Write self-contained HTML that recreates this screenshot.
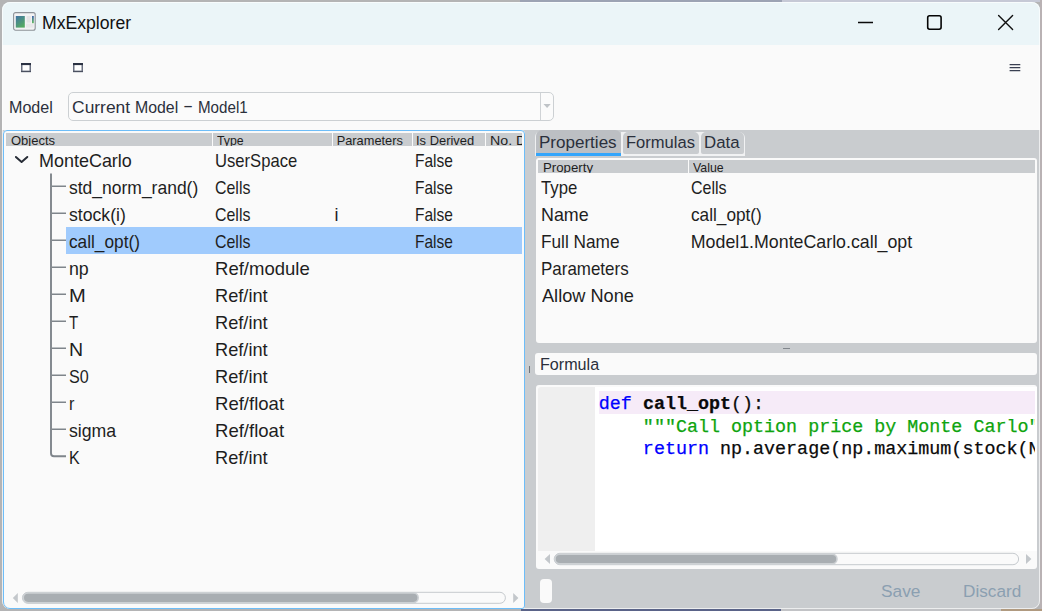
<!DOCTYPE html>
<html>
<head>
<meta charset="utf-8">
<title>MxExplorer</title>
<style>
html,body{margin:0;padding:0;}
body{width:1042px;height:611px;overflow:hidden;background:#b4b4b5;position:relative;
  font-family:"Liberation Sans","DejaVu Sans",sans-serif;color:#1b1b1b;}
*{box-sizing:border-box;}
.a{position:absolute;}
#win{position:absolute;left:2px;top:2px;width:1038px;height:607px;border-radius:8px;background:#c9cccf;overflow:hidden;}
#o{position:absolute;left:-2px;top:-2px;width:1042px;height:611px;}
#edge{position:absolute;left:2px;top:2px;width:1038px;height:607px;border-radius:8px;border:1px solid rgba(255,255,255,.65);pointer-events:none;}
.t{position:absolute;white-space:nowrap;transform-origin:0 0;}
.sep{position:absolute;top:0;width:1px;height:13px;background:#fafafa;}
.mono{font-family:"Liberation Mono","DejaVu Sans Mono",monospace;font-size:18.36px;white-space:pre;-webkit-text-stroke:0.25px;position:absolute;line-height:23px;color:#0a0a0a;}
.kw{color:#0000ff;}
.st{color:#0ea40e;}
</style>
</head>
<body>
<!-- desktop fragments visible outside the window -->
<div class="a" style="left:520px;top:0;width:262px;height:2px;background:#9ca3b4;"></div>
<div class="a" style="left:782px;top:0;width:260px;height:2px;background:#c6c9d6;"></div>
<div class="a" style="left:1040px;top:0;width:2px;height:611px;background:#b9b2b4;"></div>
<div class="a" style="left:521px;top:609px;width:260px;height:2px;background:#5a6388;"></div>
<div class="a" style="left:781px;top:609px;width:220px;height:2px;background:#c2c3c6;"></div>
<div class="a" style="left:1001px;top:609px;width:41px;height:2px;background:#b09a80;"></div>

<div id="win"><div id="o">
  <!-- title bar -->
  <div class="a" id="title" style="left:2px;top:2px;width:1038px;height:43px;background:#ebf5f8;"></div>
  <svg class="a" style="left:12px;top:11px" width="25" height="22" viewBox="0 0 25 22">
    <defs><linearGradient id="g1" x1="0" y1="0" x2="0.6" y2="1"><stop offset="0" stop-color="#4173a6"/><stop offset="1" stop-color="#55aa62"/></linearGradient>
    <linearGradient id="g2" x1="0" y1="0" x2="0" y2="1"><stop offset="0" stop-color="#3f64ad"/><stop offset="1" stop-color="#62bb5e"/></linearGradient></defs>
    <rect x="1.6" y="1.6" width="21.6" height="17.6" rx="2" fill="#f3f3f4" stroke="#8d9298" stroke-width="1.1"/>
    <rect x="3.8" y="5" width="9" height="11.6" fill="url(#g1)"/>
    <rect x="14.6" y="5" width="4.2" height="6.6" fill="#e4e4e5"/>
    <rect x="14" y="12.6" width="7.6" height="4" fill="#e8e8e9"/>
    <rect x="20" y="5" width="1.8" height="7.2" fill="url(#g2)"/>
  </svg>
  <svg class="a" style="left:850px;top:8px" width="180" height="30" viewBox="0 0 180 30">
    <path d="M8 14.5H23" stroke="#0a0a0a" stroke-width="1.3" fill="none"/>
    <rect x="77.7" y="7.8" width="13.4" height="13.4" rx="1.9" stroke="#050505" stroke-width="1.6" fill="none"/>
    <path d="M148.6 7.5L162.6 21.5M162.6 7.5L148.6 21.5" stroke="#111" stroke-width="1.4" fill="none" stroke-linecap="round"/>
  </svg>
  <!-- toolbar -->
  <div class="a" style="left:2px;top:45px;width:1038px;height:85px;background:#fafafa;"></div>
  <svg class="a" style="left:20px;top:62px" width="12" height="12" viewBox="0 0 12 12"><rect x="1.75" y="1.75" width="8.5" height="7.6" fill="#fff" stroke="#6a7080" stroke-width="1.5"/><rect x="1" y="1" width="10" height="2.1" fill="#2b3243"/><rect x="1" y="9.2" width="10" height="0.9" fill="#424959"/></svg>
  <svg class="a" style="left:72px;top:62px" width="12" height="12" viewBox="0 0 12 12"><rect x="1.75" y="1.75" width="8.5" height="7.6" fill="#fff" stroke="#6a7080" stroke-width="1.5"/><rect x="1" y="1" width="10" height="2.1" fill="#2b3243"/><rect x="1" y="9.2" width="10" height="0.9" fill="#424959"/></svg>
  <svg class="a" style="left:1008px;top:63px" width="14" height="10" viewBox="0 0 14 10"><path d="M1.6 1.55H12.3M1.6 4.55H12.3M1.6 7.55H12.3" stroke="#3a4052" stroke-width="1.2"/></svg>
  <div class="a" style="left:68px;top:92px;width:486px;height:29px;border:1px solid #ccd0d3;border-radius:5px;background:#fbfbfb;"></div>
  <div class="a" style="left:540px;top:93px;width:1px;height:27px;background:#d0d3d6;"></div>
  <svg class="a" style="left:543px;top:103px" width="9" height="6" viewBox="0 0 9 6"><path d="M0.5 1H7.7L4.1 5Z" fill="#bfc3c7"/></svg>

  <!-- tree panel -->
  <div class="a" style="left:3px;top:130px;width:522px;height:479px;background:#fafafa;border-radius:4px 4px 3px 7px;"></div>
  <div class="a" style="left:6px;top:133px;width:516px;height:13px;background:#c9cccf;overflow:hidden;">
    <div class="sep" style="left:206px"></div><div class="sep" style="left:326px"></div><div class="sep" style="left:406px"></div><div class="sep" style="left:479px"></div>
<div class="t" style="left:4.69px;top:-1.04px;font-size:12.8px;line-height:17px;color:#1e1e1e;transform:scaleX(1.0167);">Objects</div>
<div class="t" style="left:211.21px;top:-1.04px;font-size:12.8px;line-height:17px;color:#1e1e1e;transform:scaleX(0.9618);">Type</div>
<div class="t" style="left:330.70px;top:-1.04px;font-size:12.8px;line-height:17px;color:#1e1e1e;">Parameters</div>
<div class="t" style="left:410.39px;top:-1.04px;font-size:12.8px;line-height:17px;color:#1e1e1e;transform:scaleX(1.0108);">Is Derived</div>
<div class="t" style="left:483.59px;top:-1.04px;font-size:12.8px;line-height:17px;color:#1e1e1e;transform:scaleX(1.1100);">No. D</div>
  </div>
  <div class="a" style="left:66px;top:227px;width:456px;height:27px;background:#a0cbfd;"></div>
  <svg class="a" style="left:0;top:130px" width="100" height="350" viewBox="0 130 100 350">
    <g stroke="#7f858b" fill="none">
      <path d="M51 173.4V453.3Q51 456.3 54 456.3H66" stroke-width="1.9"/>
      <path d="M52 186.3H66M52 213.3H66M52 240.3H66M52 267.3H66M52 294.3H66M52 321.3H66M52 348.3H66M52 375.3H66M52 402.3H66M52 429.3H66" stroke-width="1.6"/>
    </g>
    <path d="M15.9 157L21.6 162L27.3 157" stroke="#272c36" stroke-width="2" fill="none" stroke-linecap="round" stroke-linejoin="round"/>
  </svg>
  <svg class="a" style="left:8px;top:590px" width="514" height="16" viewBox="8 590 514 16">
    <path d="M17.8 593V603L12.8 598Z" fill="#c3c7cb"/>
    <rect x="22.4" y="592.3" width="483" height="11" rx="5.5" fill="#fafafa" stroke="#c6cace" stroke-width="1"/>
    <rect x="23.2" y="592.9" width="395" height="9.8" rx="4.9" fill="#a9aeb2" stroke="#cdd1d4" stroke-width="1.6"/>
    <path d="M513.2 593V603L518.4 598Z" fill="#c3c7cb"/>
  </svg>

  <!-- tabs -->
  <div class="a" style="left:535px;top:131px;width:6px;height:25px;background:#eff0f1;border-radius:6px 0 0 0;"></div>
  <div class="a" style="left:621px;top:132px;width:124px;height:24px;background:#f1f2f3;border-radius:0 6px 0 0;"></div>
  <div class="a" style="left:536px;top:130px;width:85px;height:26px;background:#bcbfc3;border-radius:6px 6px 0 0;"></div>
  <div class="a" style="left:536px;top:153px;width:85px;height:3px;background:#33a5fb;"></div>
  <div class="a" style="left:623px;top:132px;width:75.5px;height:22px;background:#c9cccf;border-radius:5px 5px 2px 2px;"></div>
  <div class="a" style="left:701px;top:132px;width:43px;height:22px;background:#c9cccf;border-radius:5px 5px 2px 2px;"></div>

  <!-- properties panel -->
  <div class="a" style="left:536px;top:158px;width:501px;height:185px;background:#fafafa;border-radius:3px;"></div>
  <div class="a" style="left:538px;top:160px;width:497px;height:13px;background:#c9cccf;overflow:hidden;">
    <div class="sep" style="left:150px"></div>
<div class="t" style="left:4.67px;top:-1.04px;font-size:12.8px;line-height:17px;color:#1e1e1e;transform:scaleX(1.0343);">Property</div>
<div class="t" style="left:155.10px;top:-1.04px;font-size:12.8px;line-height:17px;color:#1e1e1e;transform:scaleX(0.9626);">Value</div>
  </div>
  <div class="a" style="left:783px;top:348px;width:7px;height:1px;background:#81868c;"></div>
  <div class="a" style="left:529px;top:366px;width:1px;height:7px;background:#6f747a;"></div>

  <!-- formula label -->
  <div class="a" style="left:535px;top:353px;width:502px;height:22px;background:#fafafa;border-radius:3px;"></div>

  <!-- code editor -->
  <div class="a" style="left:536px;top:385px;width:501px;height:184px;background:#fafafa;border-radius:3px;"></div>
  <div class="a" style="left:595px;top:387px;width:442px;height:164px;background:#fff;"></div>
  <div class="a" style="left:595px;top:387px;width:440px;height:164px;overflow:hidden;">
    <div class="a" style="left:4px;top:4px;width:437px;height:23px;background:#f6ebf8;"></div>
    <div class="mono" style="left:3.8px;top:6px;"><span class="kw">def</span> <b>call_opt</b>():</div>
    <div class="mono" style="left:3.8px;top:28.7px;"><span class="st">    """Call option price by Monte Carlo"</span></div>
    <div class="mono" style="left:3.8px;top:51.4px;"><span class="kw">    return</span> np.average(np.maximum(stock(N</div>
  </div>
  <div class="a" style="left:538px;top:387px;width:57px;height:164px;background:#efefef;border-radius:3px 0 0 0;"></div>
  <svg class="a" style="left:540px;top:551px" width="496" height="16" viewBox="540 551 496 16">
    <path d="M550 554V564L544.6 559Z" fill="#c3c7cb"/>
    <rect x="554.2" y="553.3" width="464.4" height="11.4" rx="5.7" fill="#fafafa" stroke="#c6cace" stroke-width="1"/>
    <rect x="555" y="554.1" width="282" height="9.8" rx="4.9" fill="#a9aeb2" stroke="#cdd1d4" stroke-width="1.6"/>
    <path d="M1026 554V564L1031.4 559Z" fill="#c3c7cb"/>
  </svg>

  <!-- bottom -->
  <div class="a" style="left:540px;top:579px;width:12px;height:24px;background:#fafafa;border-radius:4px;"></div>

<div class="t" style="left:42.29px;top:12.14px;font-size:17.5px;line-height:23px;color:#111;transform:scaleX(1.0073);">MxExplorer</div>
<div class="t" style="left:8.60px;top:96.37px;font-size:17.4px;line-height:23px;color:#2b303c;transform:scaleX(0.9260);">Model</div>
<div class="t" style="left:72.10px;top:96.37px;font-size:17.4px;line-height:23px;color:#2b303c;">Current</div>
<div class="t" style="left:134.92px;top:96.37px;font-size:17.4px;line-height:23px;color:#2b303c;transform:scaleX(0.9126);">Model</div>
<div class="t" style="left:183.28px;top:94.37px;font-size:17.4px;line-height:23px;color:#2b303c;transform:scaleX(1.7500);">-</div>
<div class="t" style="left:197.88px;top:96.37px;font-size:17.4px;line-height:23px;color:#2b303c;transform:scaleX(0.8708);">Model1</div>
<div class="t" style="left:539.03px;top:130.97px;font-size:17.4px;line-height:23px;color:#2b303c;transform:scaleX(0.9793);">Properties</div>
<div class="t" style="left:625.87px;top:130.97px;font-size:17.4px;line-height:23px;color:#2b303c;transform:scaleX(0.9516);">Formulas</div>
<div class="t" style="left:703.75px;top:130.97px;font-size:17.4px;line-height:23px;color:#2b303c;transform:scaleX(0.9667);">Data</div>
<div class="t" style="left:540.30px;top:353.37px;font-size:17.4px;line-height:23px;color:#2b303c;transform:scaleX(0.9273);">Formula</div>
<div class="t" style="left:880.60px;top:580.17px;font-size:17.4px;line-height:23px;color:#8b9fb1;transform:scaleX(0.9952);">Save</div>
<div class="t" style="left:963.12px;top:580.17px;font-size:17.4px;line-height:23px;color:#8b9fb1;transform:scaleX(0.9876);">Discard</div>
<div class="t" style="left:39.19px;top:150.23px;font-size:17.8px;line-height:23px;color:#1e1e1e;transform:scaleX(1.0099);">MonteCarlo</div>
<div class="t" style="left:214.99px;top:150.23px;font-size:17.8px;line-height:23px;color:#1e1e1e;transform:scaleX(0.9343);">UserSpace</div>
<div class="t" style="left:415.38px;top:150.23px;font-size:17.8px;line-height:23px;color:#1e1e1e;transform:scaleX(0.8714);">False</div>
<div class="t" style="left:69.11px;top:177.23px;font-size:17.8px;line-height:23px;color:#1e1e1e;transform:scaleX(0.9835);">std_norm_rand()</div>
<div class="t" style="left:215.39px;top:177.23px;font-size:17.8px;line-height:23px;color:#1e1e1e;transform:scaleX(0.8959);">Cells</div>
<div class="t" style="left:415.38px;top:177.23px;font-size:17.8px;line-height:23px;color:#1e1e1e;transform:scaleX(0.8714);">False</div>
<div class="t" style="left:69.10px;top:204.23px;font-size:17.8px;line-height:23px;color:#1e1e1e;transform:scaleX(0.9924);">stock(i)</div>
<div class="t" style="left:215.39px;top:204.23px;font-size:17.8px;line-height:23px;color:#1e1e1e;transform:scaleX(0.8959);">Cells</div>
<div class="t" style="left:334.50px;top:204.23px;font-size:17.8px;line-height:23px;color:#1e1e1e;">i</div>
<div class="t" style="left:415.38px;top:204.23px;font-size:17.8px;line-height:23px;color:#1e1e1e;transform:scaleX(0.8714);">False</div>
<div class="t" style="left:68.82px;top:231.23px;font-size:17.8px;line-height:23px;color:#1e1e1e;transform:scaleX(0.9695);">call_opt()</div>
<div class="t" style="left:215.39px;top:231.23px;font-size:17.8px;line-height:23px;color:#1e1e1e;transform:scaleX(0.8959);">Cells</div>
<div class="t" style="left:415.38px;top:231.23px;font-size:17.8px;line-height:23px;color:#1e1e1e;transform:scaleX(0.8714);">False</div>
<div class="t" style="left:68.90px;top:258.23px;font-size:17.8px;line-height:23px;color:#1e1e1e;">np</div>
<div class="t" style="left:214.74px;top:258.23px;font-size:17.8px;line-height:23px;color:#1e1e1e;transform:scaleX(1.0424);">Ref/module</div>
<div class="t" style="left:68.51px;top:285.23px;font-size:17.8px;line-height:23px;color:#1e1e1e;transform:scaleX(1.1333);">M</div>
<div class="t" style="left:214.77px;top:285.23px;font-size:17.8px;line-height:23px;color:#1e1e1e;transform:scaleX(1.0240);">Ref/int</div>
<div class="t" style="left:69.06px;top:312.23px;font-size:17.8px;line-height:23px;color:#1e1e1e;transform:scaleX(0.8515);">T</div>
<div class="t" style="left:214.77px;top:312.23px;font-size:17.8px;line-height:23px;color:#1e1e1e;transform:scaleX(1.0240);">Ref/int</div>
<div class="t" style="left:68.56px;top:339.23px;font-size:17.8px;line-height:23px;color:#1e1e1e;transform:scaleX(1.0990);">N</div>
<div class="t" style="left:214.77px;top:339.23px;font-size:17.8px;line-height:23px;color:#1e1e1e;transform:scaleX(1.0240);">Ref/int</div>
<div class="t" style="left:68.87px;top:366.23px;font-size:17.8px;line-height:23px;color:#1e1e1e;transform:scaleX(0.9081);">S0</div>
<div class="t" style="left:214.77px;top:366.23px;font-size:17.8px;line-height:23px;color:#1e1e1e;transform:scaleX(1.0240);">Ref/int</div>
<div class="t" style="left:69.00px;top:393.23px;font-size:17.8px;line-height:23px;color:#1e1e1e;transform:scaleX(0.9130);">r</div>
<div class="t" style="left:214.74px;top:393.23px;font-size:17.8px;line-height:23px;color:#1e1e1e;transform:scaleX(1.0425);">Ref/float</div>
<div class="t" style="left:69.10px;top:420.23px;font-size:17.8px;line-height:23px;color:#1e1e1e;transform:scaleX(0.9940);">sigma</div>
<div class="t" style="left:214.74px;top:420.23px;font-size:17.8px;line-height:23px;color:#1e1e1e;transform:scaleX(1.0425);">Ref/float</div>
<div class="t" style="left:68.74px;top:447.23px;font-size:17.8px;line-height:23px;color:#1e1e1e;transform:scaleX(0.9029);">K</div>
<div class="t" style="left:214.77px;top:447.23px;font-size:17.8px;line-height:23px;color:#1e1e1e;transform:scaleX(1.0240);">Ref/int</div>
<div class="t" style="left:541.22px;top:177.23px;font-size:17.8px;line-height:23px;color:#1e1e1e;transform:scaleX(0.9416);">Type</div>
<div class="t" style="left:690.89px;top:177.23px;font-size:17.8px;line-height:23px;color:#1e1e1e;transform:scaleX(0.9011);">Cells</div>
<div class="t" style="left:540.99px;top:204.23px;font-size:17.8px;line-height:23px;color:#1e1e1e;transform:scaleX(1.0048);">Name</div>
<div class="t" style="left:691.02px;top:204.23px;font-size:17.8px;line-height:23px;color:#1e1e1e;transform:scaleX(0.9681);">call_opt()</div>
<div class="t" style="left:541.04px;top:231.23px;font-size:17.8px;line-height:23px;color:#1e1e1e;transform:scaleX(0.9695);">Full Name</div>
<div class="t" style="left:690.80px;top:231.23px;font-size:17.8px;line-height:23px;color:#1e1e1e;">Model1.MonteCarlo.call_opt</div>
<div class="t" style="left:541.07px;top:258.23px;font-size:17.8px;line-height:23px;color:#1e1e1e;transform:scaleX(0.9533);">Parameters</div>
<div class="t" style="left:541.60px;top:285.23px;font-size:17.8px;line-height:23px;color:#1e1e1e;transform:scaleX(1.0220);">Allow None</div>
</div></div>
<div id="edge"></div>
<div class="a" style="left:3px;top:130px;width:522px;height:479px;border:1px solid #6dbdf8;border-radius:4px 4px 3px 7px;"></div>
</body>
</html>
